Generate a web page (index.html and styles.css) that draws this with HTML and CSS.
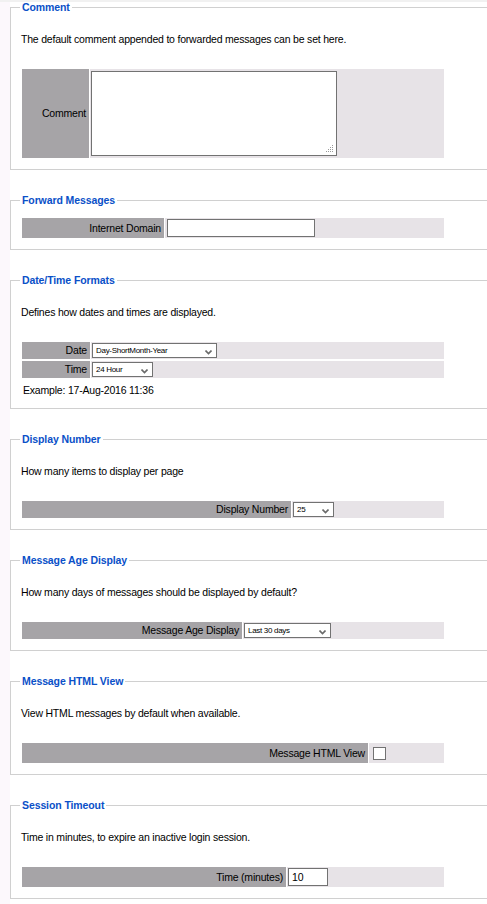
FILE: index.html
```html
<!DOCTYPE html>
<html>
<head>
<meta charset="utf-8">
<link rel="stylesheet" href="styles.css">
</head>
<body>
<div class="page">

<fieldset class="box">
  <legend class="title">Comment</legend>
  <p class="desc">The default comment appended to forwarded messages can be set here.</p>
  <div class="form lw-comment">
    <div class="row">
      <div class="lbl">Comment</div>
      <div class="val">
        <span class="ta-wrap">
          <textarea class="ta"></textarea>
          <svg class="grip" width="9" height="8" viewBox="0 0 9 8">
            <g fill="#9a9a9a">
              <rect x="7" y="0" width="1" height="1"/>
              <rect x="7" y="2" width="1" height="1"/>
              <rect x="5" y="2" width="1" height="1"/>
              <rect x="7" y="4" width="1" height="1"/>
              <rect x="5" y="4" width="1" height="1"/>
              <rect x="3" y="4" width="1" height="1"/>
              <rect x="7" y="6" width="1" height="1"/>
              <rect x="5" y="6" width="1" height="1"/>
              <rect x="3" y="6" width="1" height="1"/>
              <rect x="1" y="6" width="1" height="1"/>
            </g>
          </svg>
        </span>
      </div>
    </div>
  </div>
</fieldset>

<fieldset class="box">
  <legend class="title">Forward Messages</legend>
  <div class="form form-top lw-forward">
    <div class="row">
      <div class="lbl">Internet Domain</div>
      <div class="val"><input class="txt txt-domain" type="text"></div>
    </div>
  </div>
</fieldset>

<fieldset class="box">
  <legend class="title">Date/Time Formats</legend>
  <p class="desc">Defines how dates and times are displayed.</p>
  <div class="form lw-date">
    <div class="row">
      <div class="lbl">Date</div>
      <div class="val">
        <span class="sel sel-date">
          <span class="sel-text">Day-ShortMonth-Year</span>
          <svg class="chev" width="7" height="5" viewBox="0 0 7 5"><path d="M0.5 0.5 L3.5 3.5 L6.5 0.5" fill="none" stroke="#6a6a6a" stroke-width="1.6"/></svg>
        </span>
      </div>
    </div>
    <div class="row">
      <div class="lbl">Time</div>
      <div class="val">
        <span class="sel sel-time">
          <span class="sel-text">24 Hour</span>
          <svg class="chev" width="7" height="5" viewBox="0 0 7 5"><path d="M0.5 0.5 L3.5 3.5 L6.5 0.5" fill="none" stroke="#6a6a6a" stroke-width="1.6"/></svg>
        </span>
      </div>
    </div>
  </div>
  <p class="example">Example: 17-Aug-2016 11:36</p>
</fieldset>

<fieldset class="box">
  <legend class="title">Display Number</legend>
  <p class="desc">How many items to display per page</p>
  <div class="form lw-display">
    <div class="row">
      <div class="lbl">Display Number</div>
      <div class="val">
        <span class="sel sel-num">
          <span class="sel-text">25</span>
          <svg class="chev" width="7" height="5" viewBox="0 0 7 5"><path d="M0.5 0.5 L3.5 3.5 L6.5 0.5" fill="none" stroke="#6a6a6a" stroke-width="1.6"/></svg>
        </span>
      </div>
    </div>
  </div>
</fieldset>

<fieldset class="box">
  <legend class="title">Message Age Display</legend>
  <p class="desc">How many days of messages should be displayed by default?</p>
  <div class="form lw-age">
    <div class="row">
      <div class="lbl">Message Age Display</div>
      <div class="val">
        <span class="sel sel-age">
          <span class="sel-text">Last 30 days</span>
          <svg class="chev" width="7" height="5" viewBox="0 0 7 5"><path d="M0.5 0.5 L3.5 3.5 L6.5 0.5" fill="none" stroke="#6a6a6a" stroke-width="1.6"/></svg>
        </span>
      </div>
    </div>
  </div>
</fieldset>

<fieldset class="box">
  <legend class="title">Message HTML View</legend>
  <p class="desc">View HTML messages by default when available.</p>
  <div class="form lw-html">
    <div class="row row-tall">
      <div class="lbl">Message HTML View</div>
      <div class="val val-check"><span class="check"></span></div>
    </div>
  </div>
</fieldset>

<fieldset class="box">
  <legend class="title">Session Timeout</legend>
  <p class="desc">Time in minutes, to expire an inactive login session.</p>
  <div class="form lw-session">
    <div class="row">
      <div class="lbl">Time (minutes)</div>
      <div class="val"><input class="txt txt-min" type="text" value="10"></div>
    </div>
  </div>
</fieldset>

</div>
</body>
</html>
```

FILE: styles.css
```css
html, body {
  margin: 0;
  padding: 0;
}
body {
  background:
    linear-gradient(#f1f1f1, #f1f1f1) 0 0 / 100% 2px no-repeat,
    linear-gradient(to right, #fcf8fc 0, #fcf8fc 10px, #ffffff 10px);
  font-family: "Liberation Sans", Arial, sans-serif;
  font-size: 10.5px;
  letter-spacing: -0.2px;
  line-height: 13px;
  color: #000;
  overflow: hidden;
}
.page {
  padding: 1px 0 0 10px;
}
.box {
  margin: 0 0 24px 0;
  padding: 0 0 11px 9px;
  border: 1px solid #d0d0d0;
  border-right: none;
  min-width: 0;
}
.title {
  padding: 0 2px;
  font-weight: bold;
  letter-spacing: -0.1px;
  color: #0a50c8;
  line-height: 13px;
}
.desc {
  margin: 19px 0 23px 1px;
}
.example {
  margin: 6px 0 0 3px;
}
.form {
  width: 422px;
  margin-left: 2px;
  display: flex;
  flex-direction: column;
  gap: 2px;
}
.form-top {
  margin-top: 11px;
}
.row {
  display: grid;
  grid-template-columns: var(--lw) 1fr;
  column-gap: 1px;
}
.lw-comment { --lw: 67px; }
.lw-forward { --lw: 142px; }
.lw-date { --lw: 68px; }
.lw-display { --lw: 269px; }
.lw-age { --lw: 220px; }
.lw-html { --lw: 346px; }
.lw-session { --lw: 264px; }

.lbl {
  background: #a6a4a7;
  text-align: right;
  padding-right: 3px;
  display: flex;
  align-items: center;
  justify-content: flex-end;
}
.val {
  background: #e7e3e7;
  padding: 1px 0 1px 1px;
  display: flex;
  align-items: center;
}
.lw-comment .val {
  padding: 2px 0 2px 1px;
}
.ta-wrap {
  position: relative;
  display: block;
  width: 246px;
  height: 85px;
}
.ta {
  box-sizing: border-box;
  width: 246px;
  height: 85px;
  margin: 0;
  padding: 0;
  border: 1px solid #727272;
  background: #fff;
  resize: none;
  display: block;
}
.grip {
  position: absolute;
  right: 3px;
  bottom: 3px;
}
.txt {
  box-sizing: border-box;
  height: 18px;
  margin: 0;
  padding: 0 3px;
  border: 1px solid #727272;
  background: #fff;
  font-family: "Liberation Sans", Arial, sans-serif;
  font-size: 10.5px;
  letter-spacing: -0.2px;
  color: #000;
  outline: none;
}
.txt-domain { width: 148px; margin-left: 1px; }
.txt-min { width: 40px; }
.sel {
  position: relative;
  box-sizing: border-box;
  height: 15px;
  border: 1px solid #727272;
  background: #fff;
  display: flex;
  align-items: center;
  padding-left: 3px;
}
.sel-text {
  font-size: 8px;
  letter-spacing: -0.3px;
  line-height: 13px;
  white-space: nowrap;
}
.chev {
  position: absolute;
  right: 4px;
  top: 6px;
}
.sel-date { width: 125px; }
.sel-time { width: 61px; }
.sel-num { width: 41px; }
.sel-age { width: 87px; }
.row-tall .val {
  height: 18px;
}
.val-check {
  padding-left: 4px;
}
.check {
  box-sizing: border-box;
  width: 13px;
  height: 13px;
  border: 1px solid #727272;
  background: #fff;
  display: block;
}
```
